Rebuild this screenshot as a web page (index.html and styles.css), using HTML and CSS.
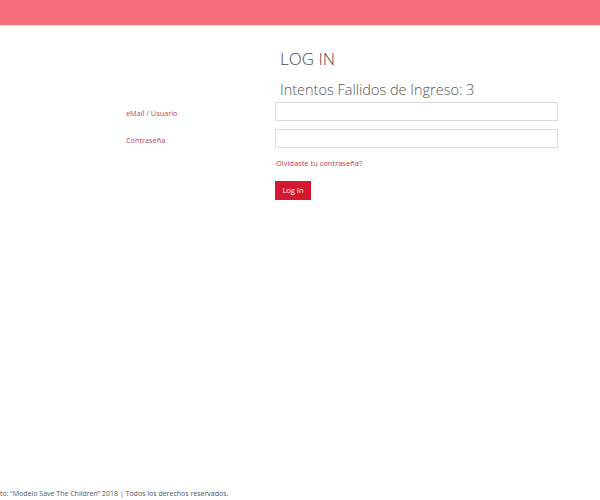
FILE: index.html
```html
<!DOCTYPE html>
<html lang="es">
<head>
<meta charset="utf-8">
<title>Log In</title>
<link rel="stylesheet" href="styles.css">
</head>
<body>
<header class="topbar"></header>
<main class="page">
  <div class="titles">
    <h1 class="title">LOG IN</h1>
    <h2 class="subtitle">Intentos Fallidos de Ingreso: 3</h2>
  </div>
  <form class="login">
    <label class="label" for="user">eMail / Usuario</label>
    <input class="field" id="user" type="text">
    <label class="label" for="pass">Contraseña</label>
    <input class="field" id="pass" type="password">
    <div class="spacer"></div>
    <a class="forgot" href="#">Olvidaste tu contraseña?</a>
    <div class="spacer"></div>
    <div><button class="btn" type="button">Log In</button></div>
  </form>
</main>
<footer class="footer">to: “Modelo Save The Children” 2018 | Todos los derechos reservados.</footer>
</body>
</html>
```
FILE: styles.css
```css
html, body {
  margin: 0;
  padding: 0;
  height: 100%;
}
body {
  font-family: "Open Sans", "Liberation Sans", sans-serif;
  background: #fff;
  color: #555;
  display: flex;
  flex-direction: column;
}
.topbar {
  height: 25px;
  background: #f56b78;
  box-shadow: 0 1px 1px rgba(0,0,0,0.08);
}
.page {
  flex: 1;
}
.titles {
  margin-left: 280px;
  padding-top: 22px;
  margin-bottom: 2px;
}
.title {
  margin: 0;
  font-weight: 300;
  font-size: 17px;
  line-height: 24px;
  color: #4a4a4a;
}
.subtitle {
  margin: 9px 0 0 0;
  font-weight: 300;
  font-size: 14.5px;
  line-height: 20px;
  color: #555;
}
.login {
  display: grid;
  grid-template-columns: 149px 283px;
  margin-left: 126px;
  row-gap: 8px;
  align-items: center;
}
.label {
  font-size: 7.3px;
  color: #bb4756;
  padding-top: 2px;
}
.field {
  box-sizing: border-box;
  height: 19px;
  width: 283px;
  margin: 0;
  border: 1px solid #dcdcdc;
  background: #fff;
}
.forgot {
  font-size: 7.5px;
  color: #b5404f;
  text-decoration: none;
  margin-top: 2px;
  padding-left: 1px;
}
.btn {
  margin-top: 4px;
  width: 36px;
  height: 19px;
  border: 0;
  padding: 0;
  background: #d2192f;
  color: #fff;
  font-family: "Open Sans", "Liberation Sans", sans-serif;
  font-size: 7.5px;
}
.footer {
  font-size: 7px;
  color: #555;
  padding: 0 0 1px 0;
  line-height: 10px;
}
```
